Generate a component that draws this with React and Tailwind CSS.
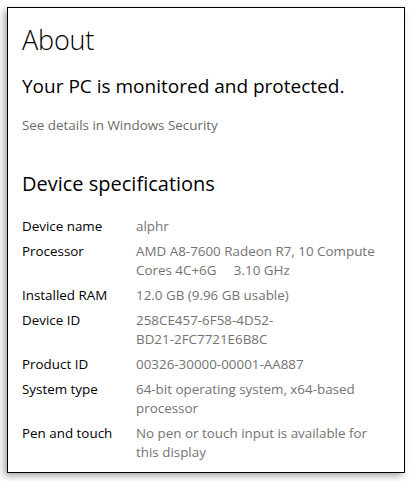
import React from "react";

const rows = [
  ["Device name", ["alphr"]],
  ["Processor", ["AMD A8-7600 Radeon R7, 10 Compute", "Cores 4C+6G\u00a0\u00a0\u00a0\u00a0 3.10 GHz"]],
  ["Installed RAM", ["12.0 GB (9.96 GB usable)"]],
  ["Device ID", ["258CE457-6F58-4D52-", "BD21-2FC7721E6B8C"]],
  ["Product ID", ["00326-30000-00001-AA887"]],
  ["System type", ["64-bit operating system, x64-based", "processor"]],
  ["Pen and touch", ["No pen or touch input is available for", "this display"]],
];

export default function App() {
  return (
    <div className="w-[413px] h-[481px] bg-white pt-[7px] pl-[7px]" style={{ fontFamily: '"Open Sans", "Noto Sans", sans-serif' }}>
      <div className="w-[398px] h-[466px] border border-black bg-white shadow-[-3px_3px_7px_rgba(0,0,0,0.35)] pl-[14px] pt-[14px]">
        <h1 className="text-[27px] leading-[36px] text-black font-light tracking-[-0.2px]">About</h1>
        <p className="mt-[15px] text-[19px] leading-[26px] text-black">Your PC is monitored and protected.</p>
        <p className="mt-[17px] text-[13.4px] leading-[18px] text-[#6a6a6a]">See details in Windows Security</p>
        <h2 className="mt-[37px] text-[20px] leading-[26px] text-black">Device specifications</h2>
        <div className="mt-[20px] flex flex-col gap-[6px] text-[13.4px] leading-[19px]">
          {rows.map(([label, vals]) => (
            <div key={label} className="flex">
              <div className="w-[114px] text-black">{label}</div>
              <div className="text-[#737373]">
                {vals.map((v) => (
                  <div key={v}>{v}</div>
                ))}
              </div>
            </div>
          ))}
        </div>
      </div>
    </div>
  );
}
